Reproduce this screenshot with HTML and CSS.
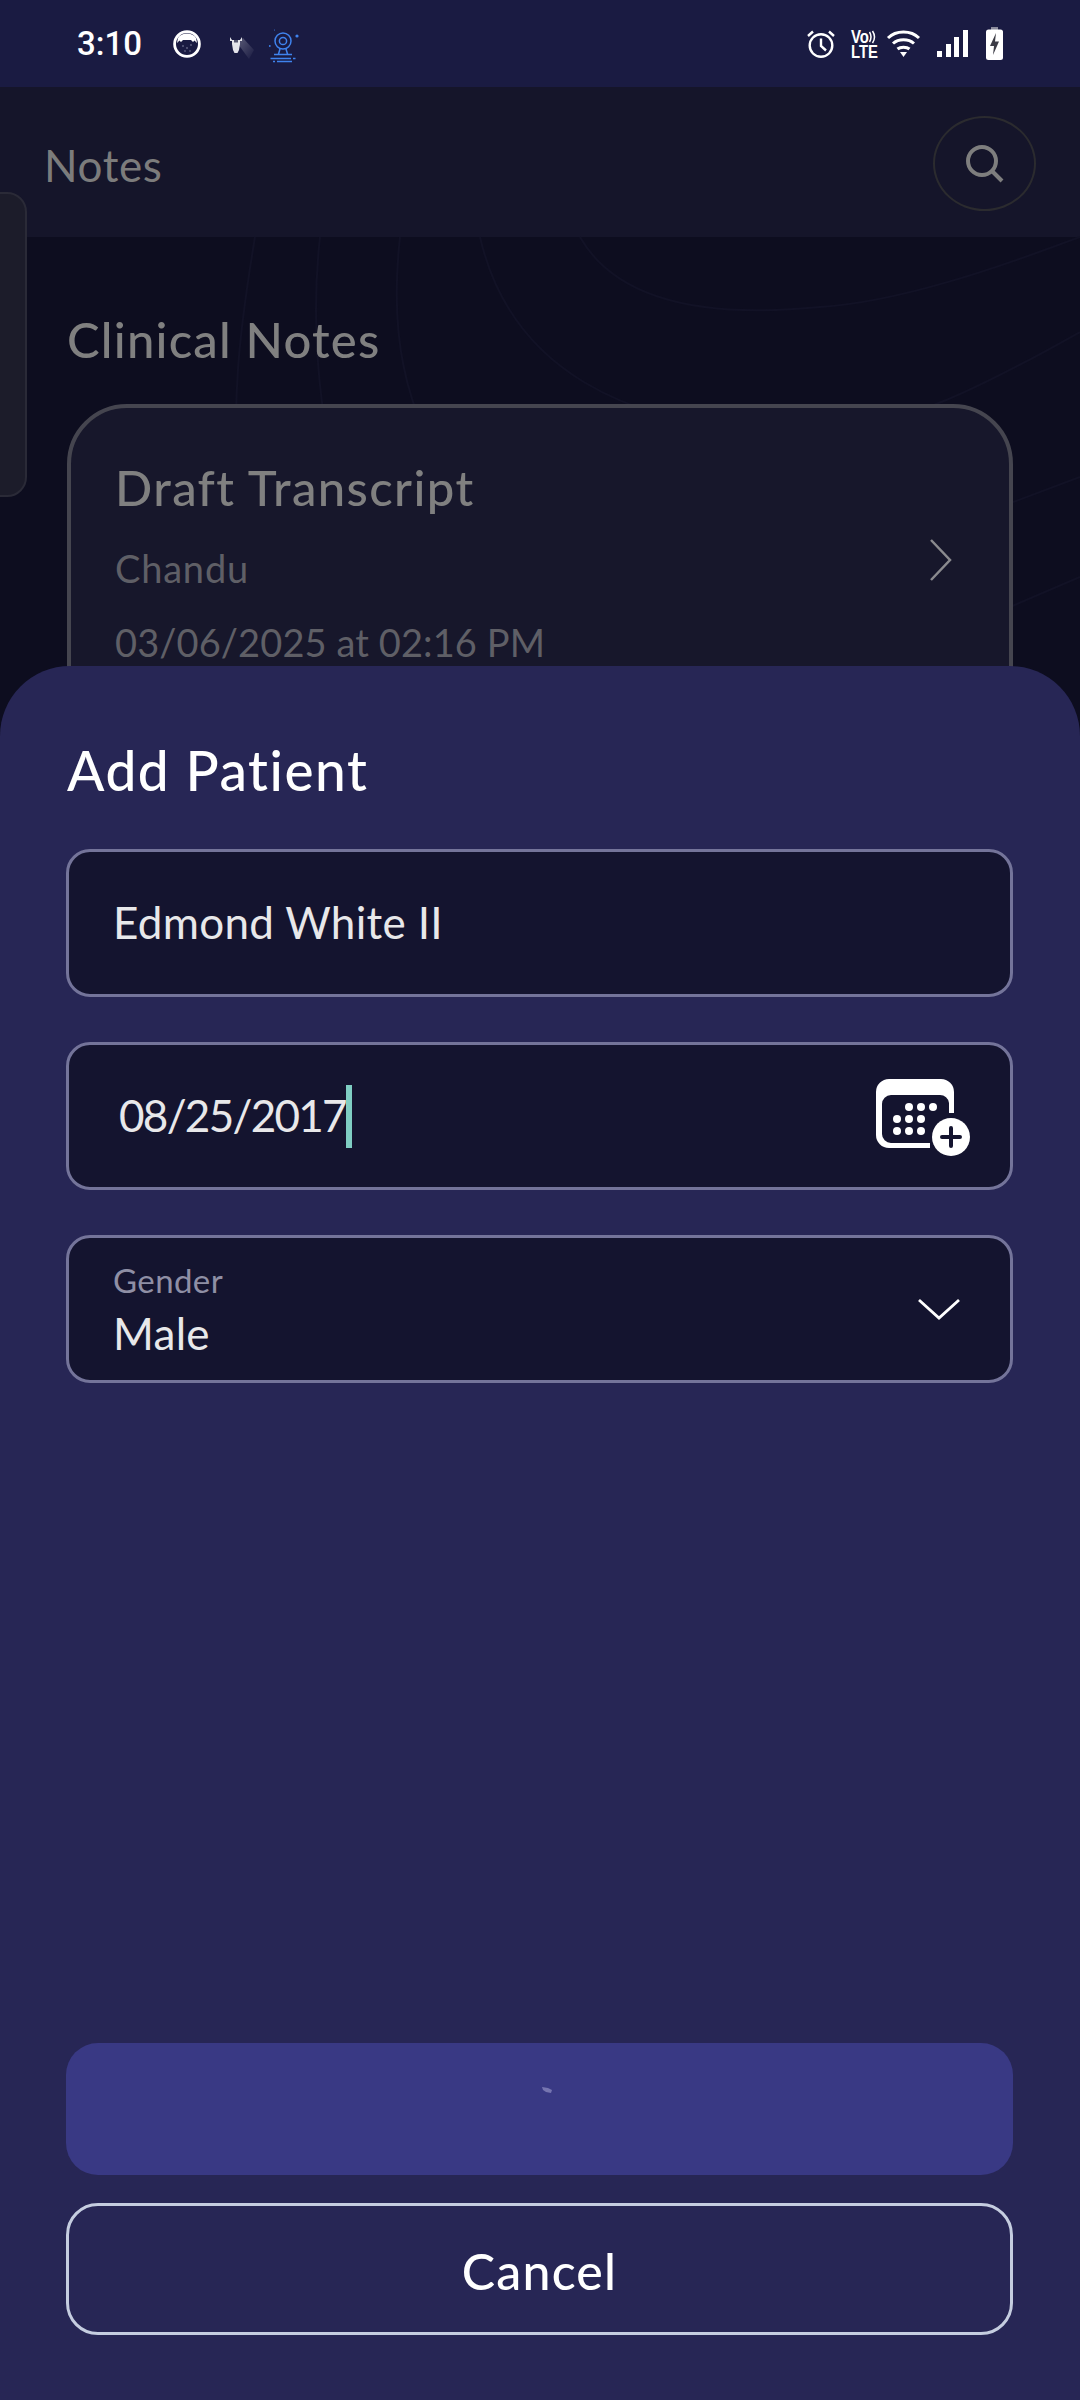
FILE: index.html
```html
<!DOCTYPE html>
<html lang="en">
<head>
<meta charset="utf-8">
<title>Add Patient</title>
<link rel="stylesheet" href="styles.css">
</head>
<body>
<div class="phone">
  <header class="status">
    <div class="status-left">
      <span class="time">3:10</span>
      <svg class="ic-face" viewBox="0 0 28 28"><circle cx="14" cy="14" r="12.400" fill="#1a1b42" stroke="#fff" stroke-width="2.800"/><path d="M5 8C8 2 20 2 23 8L24 13 21.500 10.500 20 12 18 10H10L8 12 6.500 10.500 4 13Z" fill="#fff"/><g fill="#8d8da8"><circle cx="10" cy="16" r=".8"/><circle cx="14" cy="18" r=".8"/><circle cx="18" cy="15" r=".8"/><circle cx="12" cy="21" r=".7"/><circle cx="17" cy="21" r=".7"/></g></svg>
      <svg class="ic-scooter" viewBox="0 0 28 28"><defs><linearGradient id="beam" x1="0" y1="0" x2="1" y2="1"><stop offset="0" stop-color="#fff" stop-opacity=".28"/><stop offset="1" stop-color="#fff" stop-opacity="0"/></linearGradient></defs><path d="M11 12 16 6 27 18 22 27Z" fill="url(#beam)"/><path d="M3 5 5 8H13L15 5 15 9H13V12L12 18 10.500 21H7.500L6 18 5 12V9H3Z" fill="#e4e4ea"/><rect x="7" y="8" width="4" height="2.500" fill="#55566f"/></svg>
      <svg class="ic-cam" viewBox="0 0 30 34" fill="none" stroke="#3f83ee" stroke-width="1.500"><circle cx="14" cy="12" r="8"/><circle cx="14" cy="12" r="3.600"/><path d="M11 20 9.500 25M17 20 18.500 25M5 25.500H23M1.500 29.500H22M24 29.500H26.500M8 32.500H23M4 32.500H6"/><circle cx="28" cy="7" r="1.600" fill="#3f83ee" stroke="none"/><circle cx="0.800" cy="17" r=".9" fill="#3f83ee" stroke="none"/><circle cx="5.500" cy="1" r=".5" fill="#3f83ee" stroke="none"/></svg>
    </div>
    <div class="status-right">
      <svg class="ic-alarm" viewBox="0 0 28 29" fill="none" stroke="#fff" stroke-width="2.400"><circle cx="14" cy="16.500" r="11.300"/><path d="M14 9.500V17L19 21.500M1 7 6 2.500M27 7 22 2.500"/></svg>
      <svg class="ic-lte" viewBox="0 0 27 28"><text class="lte-vo" x="0" y="13" textLength="18" lengthAdjust="spacingAndGlyphs">Vo</text><path d="M18.500 2Q21.500 7 18.500 12M21.500 1Q25.500 7 21.500 13" fill="none" stroke="#fff" stroke-width="1.500"/><text class="lte-lte" x="0" y="27.500" textLength="27" lengthAdjust="spacingAndGlyphs">LTE</text></svg>
      <svg class="ic-wifi" viewBox="0 0 33 27" fill="none" stroke="#fff" stroke-width="3"><path d="M1 8C9 0 24 0 32 8M6 13.500C11.500 8.500 21.500 8.500 27 13.500M10.500 19C13.500 16.500 19.500 16.500 22.500 19"/><path d="M13 22H20L16.500 27Z" fill="#fff" stroke="none"/></svg>
      <svg class="ic-signal" viewBox="0 0 31 27" fill="#fff"><rect x="0" y="21" width="5" height="6"/><rect x="9" y="14" width="5" height="13"/><rect x="17" y="7" width="5" height="20"/><rect x="26" y="0" width="5" height="27"/></svg>
      <svg class="ic-batt" viewBox="0 0 17 33"><rect x="5" y="0" width="7" height="3" fill="#8b8b9c"/><rect x="0" y="2.500" width="17" height="30.500" rx="2.500" fill="#fff"/><path d="M10 6 4 19H8L7 28 13 14.500H9Z" fill="#3c3c46"/></svg>
    </div>
  </header>

  <div class="appbar">
    <h1 class="appbar-title">Notes</h1>
    <button class="search" aria-label="Search">
      <svg class="ic-search" viewBox="0 0 38 38" fill="none" stroke="#7e7e7e" stroke-width="4"><circle cx="16" cy="16" r="14"/><path d="M26 26 36 36"/></svg>
    </button>
  </div>

  <main class="content">
    <svg class="contours" viewBox="0 0 1080 430" fill="none" stroke="#121226" stroke-width="2">
      <path d="M255 0C240 90 230 170 240 260M320 0C310 90 320 180 340 260M400 0C390 90 400 170 460 260"/>
      <path d="M480 0C510 130 620 190 800 200 900 195 1000 140 1080 95"/>
      <path d="M580 0C620 70 720 80 820 70 900 65 1000 30 1080 0"/>
      <path d="M1000 270 1080 240M1010 370 1080 340"/>
    </svg>
    <h2 class="section-title">Clinical Notes</h2>
    <article class="note-card">
      <div class="note-text">
        <h3 class="note-title">Draft Transcript</h3>
        <p class="note-name">Chandu</p>
        <p class="note-date">03/06/2025 at 02:16 PM</p>
      </div>
      <svg class="ic-chevron" viewBox="0 0 22 42" fill="none" stroke="#8a8a8e" stroke-width="2.500"><path d="M1 1 20 21 1 41"/></svg>
    </article>
  </main>

  <div class="side-tab"></div>

  <section class="sheet">
    <h2 class="sheet-title">Add Patient</h2>
    <div class="fields">
      <div class="field"><span class="field-value">Edmond White II</span></div>
      <div class="field field-date">
        <span class="field-value date-value">08/25/2017</span><span class="caret"></span>
        <svg class="ic-cal" viewBox="0 0 94 78">
          <path d="M13 0H65A13 13 0 0 1 78 13V34H73V24A9 9 0 0 0 64 16H15A9 9 0 0 0 6 25V55A9 9 0 0 0 15 64H54V69H13A13 13 0 0 1 0 56V13A13 13 0 0 1 13 0Z" fill="#fff"/>
          <g fill="#fff"><circle cx="33" cy="28" r="4"/><circle cx="45" cy="28" r="4"/><circle cx="57" cy="28" r="4"/><circle cx="21" cy="40" r="4"/><circle cx="33" cy="40" r="4"/><circle cx="45" cy="40" r="4"/><circle cx="21" cy="52" r="4"/><circle cx="33" cy="52" r="4"/><circle cx="45" cy="52" r="4"/></g>
          <circle cx="75" cy="58" r="19" fill="#fff"/>
          <path d="M75 49V67M66 58H84" stroke="#14142f" stroke-width="4" stroke-linecap="round"/>
        </svg>
      </div>
      <div class="field field-select">
        <div class="select-text">
          <span class="select-label">Gender</span>
          <span class="field-value select-value">Male</span>
        </div>
        <svg class="ic-down" viewBox="0 0 42 22" fill="none" stroke="#fff" stroke-width="2.800"><path d="M1 2 21 20 41 2"/></svg>
      </div>
    </div>
    <div class="actions">
      <button class="btn-primary" aria-label="Saving"><svg class="spinner" viewBox="0 0 10 6"><path d="M0 0 6 1 10 3 9 6 4 5 1 3Z" fill="#7675b0"/></svg></button>
      <button class="btn-cancel">Cancel</button>
    </div>
  </section>
</div>
</body>
</html>
```

FILE: styles.css
```css
* { box-sizing: border-box; }
html, body { margin: 0; padding: 0; background: #0d0d1f; }
h1, h2, h3, p { margin: 0; font-weight: 400; }
button { font: inherit; padding: 0; margin: 0; cursor: pointer; }
svg { display: block; flex: none; overflow: visible; }

.phone {
  position: relative;
  width: 1080px;
  height: 2400px;
  overflow: hidden;
  background: #0d0d1f;
  display: flex;
  flex-direction: column;
  font-family: "Lato", "Noto Sans", sans-serif;
  font-variant-ligatures: none;
}

.status {
  height: 87px;
  flex: none;
  background: #1a1b42;
  display: flex;
  align-items: center;
  justify-content: space-between;
  padding: 0 77px 0 77px;
}
.status-left, .status-right { display: flex; align-items: center; }
.time { font: 500 33px/44px Roboto, sans-serif; color: #fff; width: 96px; }
.ic-face { width: 28px; height: 28px; }
.ic-scooter { width: 28px; height: 28px; margin-left: 26px; margin-top: 5px; }
.ic-cam { width: 30px; height: 34px; margin-left: 14px; margin-top: 5px; }
.ic-alarm { width: 28px; height: 29px; }
.ic-lte { width: 27px; height: 28px; margin-left: 16px; }
.lte-vo { font: 700 18px "Liberation Sans", sans-serif; fill: #fff; }
.lte-lte { font: 700 19px "Liberation Sans", sans-serif; fill: #fff; }
.ic-wifi { width: 33px; height: 27px; margin-left: 9px; }
.ic-signal { width: 31px; height: 27px; margin-left: 17px; }
.ic-batt { width: 17px; height: 33px; margin-left: 18px; }

.appbar {
  height: 150px;
  flex: none;
  background: #15152a;
  display: flex;
  align-items: center;
  justify-content: space-between;
  padding: 0 44px 0 44px;
}
.appbar-title { font-size: 44px; line-height: 50px; letter-spacing: 0.6px; color: #7c7c7c; margin-top: 6px; }
.search {
  width: 103px;
  height: 95px;
  margin-top: 3px;
  background: transparent;
  border: 2px solid #2b2b2f;
  border-radius: 50%;
  display: flex;
  align-items: center;
  justify-content: center;
}
.ic-search { width: 38px; height: 38px; }

.content {
  position: relative;
  flex: 1;
  padding: 72px 67px 0 67px;
}
.contours { position: absolute; left: 0; top: 0; width: 1080px; height: 430px; }
.section-title {
  position: relative;
  font-size: 49px;
  line-height: 60px;
  font-weight: 500;
  letter-spacing: 1.2px;
  color: #808080;
}
.note-card {
  position: relative;
  margin-top: 35px;
  height: 500px;
  padding: 49px 57px 0 44px;
  background: #17172b;
  border: 4px solid #45454f;
  border-radius: 60px;
  display: flex;
  justify-content: space-between;
  align-items: flex-start;
}
.note-text { display: flex; flex-direction: column; }
.note-title { font-size: 49px; line-height: 60px; font-weight: 500; letter-spacing: 1.4px; color: #808080; }
.note-name { font-size: 38px; line-height: 46px; letter-spacing: 0.8px; color: #5f5f66; margin-top: 28px; }
.note-date { font-size: 38px; line-height: 46px; letter-spacing: 0.1px; color: #5f5f66; margin-top: 28px; }
.ic-chevron { width: 22px; height: 42px; margin-top: 82px; }

.side-tab {
  position: absolute;
  left: -4px;
  top: 192px;
  width: 31px;
  height: 305px;
  background: #1c1c2a;
  border: 2px solid #2a2a37;
  border-radius: 0 20px 20px 0;
}

.sheet {
  position: absolute;
  left: 0;
  right: 0;
  top: 666px;
  bottom: 0;
  background: #272655;
  border-radius: 70px 70px 0 0;
  padding: 72px 67px 65px 66px;
  display: flex;
  flex-direction: column;
}
.sheet-title { font-size: 55px; line-height: 64px; font-weight: 500; letter-spacing: 1.5px; margin-left: 1px; color: #fff; }
.fields { display: flex; flex-direction: column; gap: 45px; margin-top: 47px; }
.field {
  height: 148px;
  background: #14142f;
  border: 3px solid #74749a;
  border-radius: 24px;
  padding: 0 44px;
  display: flex;
  align-items: center;
}
.field-value { font-size: 44px; line-height: 54px; letter-spacing: 0.3px; color: #e8e8ea; margin-top: -3px; }
.date-value { margin-left: 6px; letter-spacing: -1.7px; }
.caret { width: 6px; height: 63px; background: #7fcdc3; }
.field-date { padding-right: 40px; }
.ic-cal { width: 94px; height: 78px; margin-left: auto; margin-top: 4px; }
.field-select { justify-content: space-between; padding-right: 50px; }
.select-text { display: flex; flex-direction: column; margin-top: 3px; }
.select-label { font-size: 33px; line-height: 38px; letter-spacing: 0.4px; color: #8f8fa5; }
.select-value { margin-top: 7px; }
.ic-down { width: 42px; height: 22px; }

.actions { margin-top: auto; display: flex; flex-direction: column; gap: 28px; }
.btn-primary {
  height: 132px;
  background: #393984;
  border: 0;
  border-radius: 32px;
  position: relative;
  display: flex;
  justify-content: center;
}
.spinner { width: 10px; height: 6px; margin-top: 44px; margin-left: 14px; }
.btn-cancel {
  height: 132px;
  background: transparent;
  border: 3px solid #c5cde0;
  border-radius: 32px;
  color: #fff;
  font-size: 50px;
  font-weight: 500;
  letter-spacing: 1.2px;
  padding-top: 4px;
}
```
